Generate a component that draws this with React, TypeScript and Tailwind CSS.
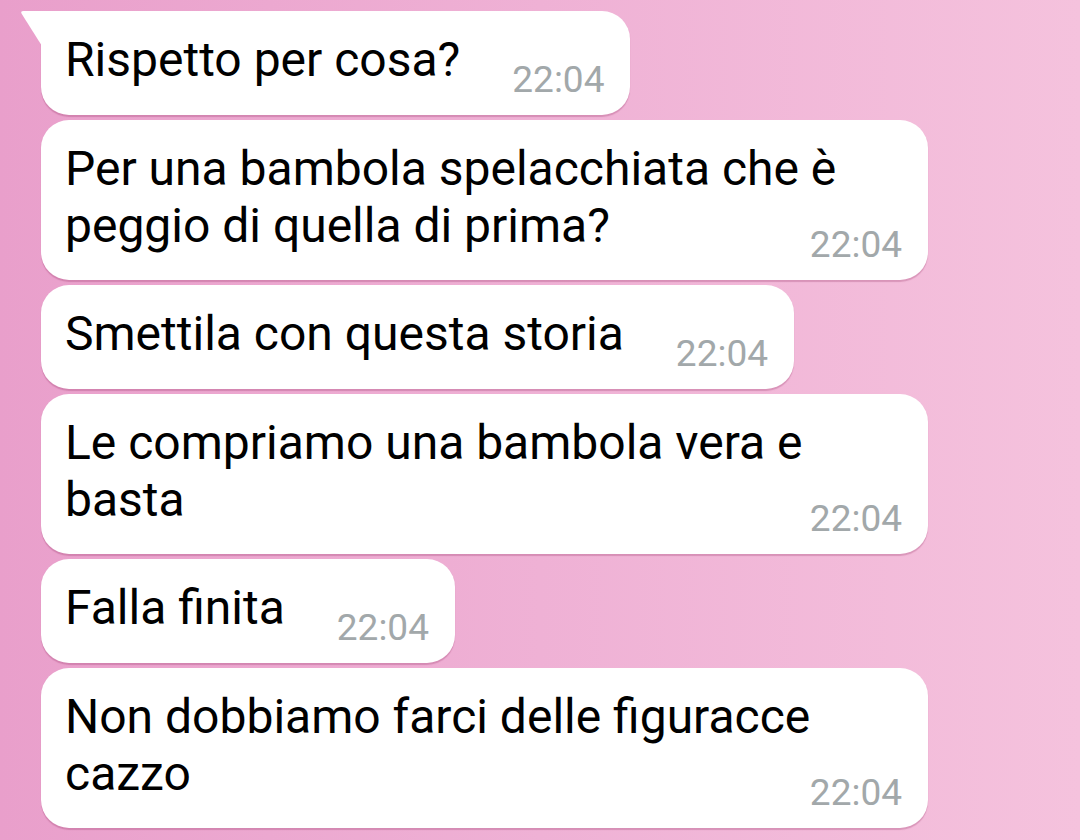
import React from 'react';

interface Msg {
  lines: string[];
  tail?: boolean;
}

const messages: Msg[] = [
  { lines: ['Rispetto per cosa?'], tail: true },
  { lines: ['Per una bambola spelacchiata che è', 'peggio di quella di prima?'] },
  { lines: ['Smettila con questa storia'] },
  { lines: ['Le compriamo una bambola vera e', 'basta'] },
  { lines: ['Falla finita'] },
  { lines: ['Non dobbiamo farci delle figuracce', 'cazzo'] },
];

const Tail = () => (
  <svg
    className="absolute left-[-21px] top-0"
    width="22"
    height="36"
    viewBox="0 0 22 36"
  >
    <path d="M22 0 L3.5 0 Q0 0 1.8 3 L22 35 Z" fill="#ffffff" />
  </svg>
);

const Bubble: React.FC<{ msg: Msg }> = ({ msg }) => {
  const multi = msg.lines.length > 1;
  const base =
    'relative bg-white pl-[24px] pr-[26px] pt-[20px] pb-[15px] shadow-[0_1.5px_1px_rgba(150,50,100,0.28)] ' +
    (msg.tail ? 'rounded-[28px] rounded-tl-none' : 'rounded-[28px]');

  if (multi) {
    return (
      <div className={base + ' w-[887px] flex flex-col'}>
        {msg.tail && <Tail />}
        <p className="text-[48px] leading-[57px] text-black whitespace-nowrap">
          {msg.lines.map((l, i) => (
            <React.Fragment key={i}>
              {l}
              {i < msg.lines.length - 1 && <br />}
            </React.Fragment>
          ))}
        </p>
        <span className="self-end mt-[-29px] text-[37px] leading-[40px] text-[#a2a8aa]">22:04</span>
      </div>
    );
  }

  return (
    <div className={base + ' self-start flex items-start'}>
      {msg.tail && <Tail />}
      <p className="text-[48px] leading-[57px] text-black whitespace-nowrap">{msg.lines[0]}</p>
      <span className="ml-[52px] mt-[29px] text-[37px] leading-[40px] text-[#a2a8aa]">22:04</span>
    </div>
  );
};

export default function App() {
  return (
    <div
      className="w-[1080px] h-[840px] overflow-hidden bg-gradient-to-r from-[#e99fcb] via-[#efb1d5] to-[#f5c2dd] pl-[41px] pt-[11px] flex flex-col gap-[5px]"
      style={{ fontFamily: 'Roboto, "Noto Sans", sans-serif' }}
    >
      {messages.map((m, i) => (
        <Bubble key={i} msg={m} />
      ))}
    </div>
  );
}
